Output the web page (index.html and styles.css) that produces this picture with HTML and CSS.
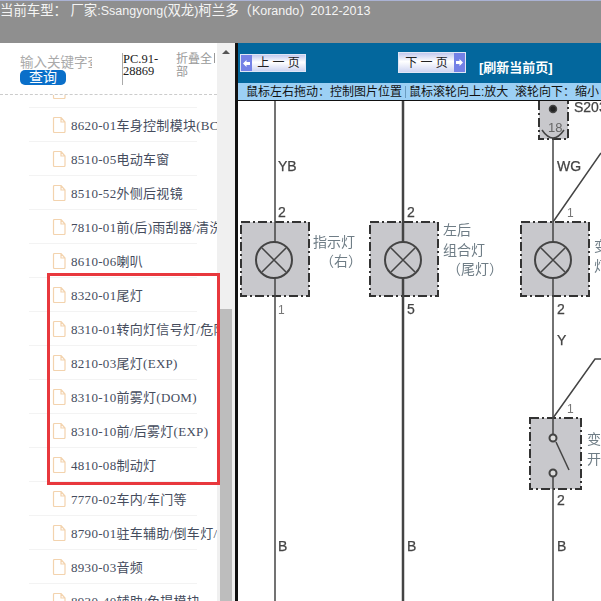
FILE: index.html
```html
<!DOCTYPE html>
<html lang="en">
<head>
  <meta charset="UTF-8">
  <title>当前车型</title>
  <link rel="stylesheet" href="styles.css">
</head>
<body>
  <div class="top-bar"><span class="cn">当前车型：</span> <span class="cn">厂家</span>:Ssangyong(<span class="cn">双龙</span>)<span class="cn">柯兰多</span><span class="cn">（</span>Korando<span class="cn paren-close">）</span>2012-2013</div>
  <div class="main">
    <div class="side">
      <div class="side-content">
        <div class="search">
          <div class="search-left">
            <div class="keyword">输入关键字查询</div>
            <button class="query-btn">查询</button>
          </div>
          <div class="pc-code">PC.91-28869</div>
          <div class="fold">折叠全部</div>
          <div class="fold-tick"></div>
        </div>
        <div class="list">
          <div class="row first"><svg class="file"><use href="#file"/></svg></div>
          <div class="row"><svg class="file"><use href="#file"/></svg><span>8620-01车身控制模块(BCM)</span></div>
          <div class="row"><svg class="file"><use href="#file"/></svg><span>8510-05电动车窗</span></div>
          <div class="row"><svg class="file"><use href="#file"/></svg><span>8510-52外侧后视镜</span></div>
          <div class="row"><svg class="file"><use href="#file"/></svg><span>7810-01前(后)雨刮器/清洗器</span></div>
          <div class="row"><svg class="file"><use href="#file"/></svg><span>8610-06喇叭</span></div>
          <div class="row"><svg class="file"><use href="#file"/></svg><span>8320-01尾灯</span></div>
          <div class="row"><svg class="file"><use href="#file"/></svg><span>8310-01转向灯信号灯/危险警告灯</span></div>
          <div class="row"><svg class="file"><use href="#file"/></svg><span>8210-03尾灯(EXP)</span></div>
          <div class="row"><svg class="file"><use href="#file"/></svg><span>8310-10前雾灯(DOM)</span></div>
          <div class="row"><svg class="file"><use href="#file"/></svg><span>8310-10前/后雾灯(EXP)</span></div>
          <div class="row"><svg class="file"><use href="#file"/></svg><span>4810-08制动灯</span></div>
          <div class="row"><svg class="file"><use href="#file"/></svg><span>7770-02车内/车门等</span></div>
          <div class="row"><svg class="file"><use href="#file"/></svg><span>8790-01驻车辅助/倒车灯/</span></div>
          <div class="row"><svg class="file"><use href="#file"/></svg><span>8930-03音频</span></div>
          <div class="row"><svg class="file"><use href="#file"/></svg><span>8930-40辅助/免提模块</span></div>
        </div>
      </div>
      <div class="scrollbar">
        <div class="arrow"></div>
        <div class="thumb"></div>
      </div>
      <div class="highlight"></div>
    </div>

    <div class="viewer">
      <div class="toolbar">
        <button class="page-btn prev">
          <span class="cap"><svg viewBox="0 0 9 9"><path d="M1 4.500L4.500 1V3H8V6H4.500V8z"/></svg></span>
          <span class="btn-text">上 一 页</span>
        </button>
        <button class="page-btn next">
          <span class="btn-text">下 一 页</span>
          <span class="cap"><svg viewBox="0 0 9 9"><path d="M8 4.500L4.500 1V3H1V6H4.500V8z"/></svg></span>
        </button>
        <a class="refresh">[刷新当前页]</a>
      </div>
      <div class="hint">鼠标左右拖动：控制图片位置<i></i>鼠标滚轮向上:放大&nbsp; 滚轮向下：缩小</div>
      <svg class="diagram" viewBox="238 101 363 500">
        <g class="box">
          <rect x="241" y="222" width="68" height="74"/>
          <rect x="370" y="222" width="68" height="74"/>
          <rect x="521" y="222" width="68" height="74"/>
          <rect x="530" y="418" width="51" height="71"/>
          <path d="M539 101V139H568V101"/>
        </g>
        <g class="wire">
          <path d="M275 101V601"/>
          <path class="heavy" d="M403 101V601"/>
          <path d="M553 139V435M553 477V601"/>
          <path d="M553 222L601 153M553 418L595 359H601"/>
          <path d="M542 130Q553 146 564 130"/>
          <circle class="lamp" cx="274" cy="260" r="18"/>
          <path d="M262 248L286 272M286 248L262 272"/>
          <circle class="lamp" cx="403" cy="260" r="18"/>
          <path d="M391 248L415 272M415 248L391 272"/>
          <circle class="lamp" cx="553" cy="260" r="18"/>
          <path d="M541 248L565 272M565 248L541 272"/>
          <circle class="pin" cx="553" cy="438" r="3.500"/>
          <circle class="pin" cx="553" cy="473" r="3.500"/>
          <path d="M556 442L569 470"/>
          <circle class="node" cx="553" cy="109" r="3.500"/>
        </g>
        <g class="label">
          <text x="278" y="171">YB</text>
          <text x="557" y="171">WG</text>
          <text x="574" y="112">S203</text>
          <text x="548" y="132" class="small">18</text>
          <text x="278" y="217">2</text>
          <text x="407" y="217">2</text>
          <text x="567" y="217" class="thin">1</text>
          <text x="278" y="314" class="thin">1</text>
          <text x="407" y="314">5</text>
          <text x="557" y="314">2</text>
          <text x="557" y="345">Y</text>
          <text x="567" y="413" class="thin">1</text>
          <text x="557" y="505">2</text>
          <text x="278" y="551">B</text>
          <text x="407" y="551">B</text>
          <text x="557" y="551">B</text>
        </g>
        <g class="note">
          <text x="313" y="247">指示灯</text>
          <text x="320" y="266">（右）</text>
          <text x="443" y="235">左后</text>
          <text x="443" y="255">组合灯</text>
          <text x="447" y="274">（尾灯）</text>
          <text x="594" y="251">变</text>
          <text x="594" y="271">灯</text>
          <text x="587" y="444">变</text>
          <text x="587" y="464">开</text>
        </g>
      </svg>
    </div>
  </div>

  <svg class="defs" width="0" height="0">
    <symbol id="file" viewBox="0 0 14 16">
      <path d="M1.500 1.500a1 1 0 0 1 1-1H9L13 5v9.500a1 1 0 0 1-1 1H2.500a1 1 0 0 1-1-1zM9 .5V5h4"/>
    </symbol>
  </svg>
</body>
</html>
```

FILE: styles.css
```css
* {
  box-sizing: border-box;
}
html, body {
  height: 100%;
}
body {
  margin: 0;
  width: 601px;
  height: 601px;
  overflow: hidden;
  font-family: "Liberation Sans", "Noto Sans CJK SC", sans-serif;
  background: #fff;
}
.defs {
  position: absolute;
}
.top-bar {
  height: 43px;
  padding-top: 1px;
  border-top: 1px solid #aab2d4;
  background: #8f8f8f;
  color: #f4f4f4;
  font-size: 12.500px;
  line-height: 18px;
  white-space: nowrap;
}
.cn {
  font-size: 13.400px;
}
.paren-close {
  letter-spacing: -2px;
}
.main {
  display: flex;
  height: 558px;
}
.side {
  position: relative;
  flex: none;
  width: 235px;
  display: flex;
  background: #fff;
}
.side-content {
  width: 217px;
  overflow: hidden;
}
.search {
  display: flex;
  height: 52px;
  padding: 10px 0 0 20px;
  border-bottom: 1px dashed #ccc;
}
.search-left {
  width: 72px;
  margin-right: 30px;
  flex: none;
}
.keyword {
  width: 72px;
  height: 17px;
  overflow: hidden;
  white-space: nowrap;
  font-size: 13.500px;
  line-height: 20px;
  color: #aaa;
}
.query-btn {
  display: block;
  width: 46px;
  height: 15px;
  padding: 0;
  border: 0;
  border-radius: 5px;
  background: #0a6fc9;
  color: #fff;
  font-family: inherit;
  font-size: 14px;
  line-height: 15px;
}
.pc-code {
  width: 54px;
  height: 32px;
  flex: none;
  font-family: "Liberation Serif", serif;
  font-size: 12.500px;
  line-height: 12px;
  color: #222;
  border-left: 1px solid #aaa;
}
.fold {
  width: 38px;
  flex: none;
  font-size: 12px;
  line-height: 13px;
  color: #999;
}
.fold-tick {
  width: 1px;
  height: 10px;
  background: #999;
}
.list {
  height: 506px;
  overflow: hidden;
}
.row {
  display: flex;
  align-items: center;
  height: 34px;
  margin-left: 29px;
  width: 168px;
  padding-left: 23px;
  border-bottom: 1px solid #f3f3f3;
  white-space: nowrap;
  font-family: "Liberation Serif", "Noto Sans CJK SC", sans-serif;
  font-size: 13px;
  letter-spacing: .3px;
  color: #454c5d;
}
.row span {
  margin-left: 5px;
}
.row.first {
  margin-top: -21px;
}
.file {
  flex: none;
  width: 14px;
  height: 16px;
  fill: none;
  stroke: #f3d3ae;
  stroke-width: 1.2;
}
.scrollbar {
  position: relative;
  flex: none;
  width: 18px;
  background: #f0f0f0;
}
.arrow {
  margin: 7px auto 0;
  width: 0;
  height: 0;
  border-left: 4px solid transparent;
  border-right: 4px solid transparent;
  border-bottom: 4px solid #555;
}
.thumb {
  position: absolute;
  left: 3px;
  top: 266px;
  bottom: 0;
  width: 12px;
  background: #bdbdbd;
}
.highlight {
  position: absolute;
  left: 47px;
  top: 230px;
  width: 173px;
  height: 212px;
  border: 3px solid #e8383d;
}
.viewer {
  flex: none;
  width: 366px;
  border-left: 3px solid #111;
  display: flex;
  flex-direction: column;
}
.toolbar {
  display: flex;
  align-items: flex-start;
  height: 40px;
  padding: 9px 0 0 2px;
  background: #03679d;
}
.page-btn {
  display: flex;
  align-items: center;
  padding: 0;
  border: 1px solid #dfe6f5;
  background: linear-gradient(#c3c9ee, #fff 45%, #cfd5f2);
  color: #222;
  font-family: inherit;
  font-size: 12px;
}
.page-btn.prev {
  width: 66px;
  height: 18px;
  margin-top: 2px;
}
.page-btn.next {
  width: 68px;
  height: 21px;
  margin-left: 92px;
}
.cap {
  display: flex;
  align-items: center;
  justify-content: center;
  width: 11px;
  height: 100%;
  background: #7481e6;
}
.cap svg {
  width: 9px;
  height: 9px;
  fill: #fff;
}
.btn-text {
  flex: 1;
  text-align: center;
  line-height: 14px;
}
.refresh {
  margin: 8px 0 0 13px;
  color: #fff;
  font-size: 13px;
  line-height: 16px;
  font-weight: bold;
  white-space: nowrap;
}
.hint {
  height: 18px;
  padding-left: 8px;
  background: #9cd0f5;
  border-bottom: 1px solid #111;
  color: #111;
  font-size: 12px;
  line-height: 18px;
  white-space: nowrap;
  overflow: hidden;
}
.hint i {
  display: inline-block;
  width: 1px;
  height: 12px;
  margin: 0 3px;
  background: #6a9cc0;
  vertical-align: -2px;
}
.diagram {
  display: block;
  width: 363px;
  height: 500px;
  filter: blur(.4px);
}
.box rect, .box path {
  fill: #c8c8cc;
  stroke: #333;
  stroke-width: 2;
  stroke-dasharray: 9 3 2 3;
}
.wire path, .wire circle {
  fill: none;
  stroke: #444;
  stroke-width: 1.5;
}
.wire .heavy {
  stroke-width: 2.5;
}
.wire .lamp {
  stroke-width: 2;
  fill: #c8c8cc;
}
.wire .pin {
  fill: #ddd;
  stroke-width: 2;
}
.wire .node {
  fill: #222;
}
.label text {
  fill: #444;
  stroke: #444;
  stroke-width: .25;
  font-family: "Liberation Sans", sans-serif;
  font-size: 14px;
}
.label .small {
  font-size: 13px;
  fill: #666;
  stroke: none;
}
.label .thin {
  font-size: 12px;
  fill: #777;
  stroke: none;
}
.note text {
  fill: #6f7d86;
  font-family: "Noto Sans CJK SC", sans-serif;
  font-size: 14px;
}
```
